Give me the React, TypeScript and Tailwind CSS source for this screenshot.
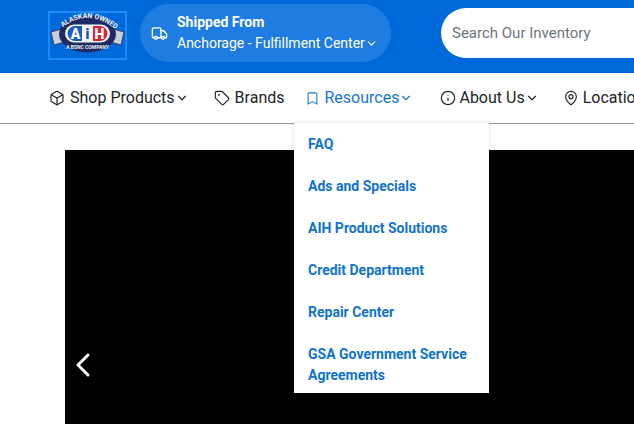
import { Box, Tag, Bookmark, Info, MapPin, ChevronDown, ChevronLeft } from "lucide-react";

function Logo() {
  return (
    <div className="w-[79px] h-[49px] border-2 border-[#1a8cff] shrink-0 flex items-center justify-center">
      <svg width="75" height="45" viewBox="0 0 75 45">
        <path d="M1 19 L15 15 L18 28 L4 32 Z" fill="#c9ced8" stroke="#39406f" strokeWidth="1" />
        <path d="M74 19 L60 15 L57 28 L71 32 Z" fill="#c9ced8" stroke="#39406f" strokeWidth="1" />
        <ellipse cx="37.5" cy="21" rx="28.5" ry="18.5" fill="#1f2a63" />
        <path id="logoArc" d="M12 15 Q37 -5 64 15" fill="none" />
        <text fontFamily="Roboto, sans-serif" fontSize="7" fontWeight="700" fill="#eef1f7">
          <textPath href="#logoArc" startOffset="1">ALASKAN OWNED</textPath>
        </text>
        <rect x="15" y="11.5" width="45" height="18" rx="9" fill="#f4f6fb" />
        <path d="M25 13 H32 V28 H25 A7.5 7.5 0 0 1 25 13 Z" fill="#1c5fc0" />
        <path d="M43 13 H50 A7.5 7.5 0 0 1 50 28 H43 Z" fill="#d8242f" />
        <text x="25.5" y="26" textAnchor="middle" fontFamily="Roboto, sans-serif" fontSize="14" fontWeight="900" fill="#fff">A</text>
        <text x="37.5" y="26" textAnchor="middle" fontFamily="Roboto, sans-serif" fontSize="14" fontWeight="900" fill="#1c4fa8">i</text>
        <text x="49.5" y="26" textAnchor="middle" fontFamily="Roboto, sans-serif" fontSize="14" fontWeight="900" fill="#fff">H</text>
        <text x="37.5" y="36" textAnchor="middle" fontFamily="Roboto, sans-serif" fontSize="5" fontWeight="700" fill="#eef1f7">A BSNC COMPANY</text>
      </svg>
    </div>
  );
}

function NavItem({ icon, label, chevron, active, className }: { icon: React.ReactNode; label: string; chevron?: boolean; active?: boolean; className?: string }) {
  return (
    <div className={`flex items-center shrink-0 ${active ? "text-[#1976d2]" : "text-[#212529]"} ${className ?? ""}`}>
      {icon}
      <span className="ml-[5px] text-[16px] leading-6 whitespace-nowrap">{label}</span>
      {chevron && <ChevronDown size={14} strokeWidth={2} />}
    </div>
  );
}

const links = ["FAQ", "Ads and Specials", "AIH Product Solutions", "Credit Department", "Repair Center", "GSA Government Service Agreements"];

export default function App() {
  return (
    <div className="relative w-[634px] h-[424px] overflow-hidden bg-white font-['Roboto',sans-serif]">
      <header className="h-[73px] bg-[#0069d9] flex items-center pl-[48px] overflow-hidden">
        <div className="mb-[2px]"><Logo /></div>
        <div className="ml-[13px] mb-[7px] w-[251px] h-[58px] shrink-0 rounded-[29px] bg-[#1f7de2] flex items-center pl-[11px] text-white">
          <svg width="17" height="17" viewBox="0 0 24 24" fill="none" stroke="currentColor" strokeWidth="2" strokeLinecap="round" strokeLinejoin="round">
            <path d="M14 18V6a2 2 0 0 0-2-2H4a2 2 0 0 0-2 2v11a1 1 0 0 0 1 1h2" />
            <path d="M15 18H9" />
            <path d="M19 18h2a1 1 0 0 0 1-1v-3.65a1 1 0 0 0-.22-.624l-3.48-4.35A1 1 0 0 0 17.52 8H14" />
            <circle cx="17" cy="18" r="2" />
            <circle cx="7" cy="18" r="2" />
          </svg>
          <div className="ml-[9px]">
            <div className="text-[14px] leading-[21px] font-bold">Shipped From</div>
            <div className="flex items-center text-[14px] leading-[21px]">
              <span className="whitespace-nowrap">Anchorage - Fulfillment Center</span>
              <ChevronDown size={13} strokeWidth={2} />
            </div>
          </div>
        </div>
        <div className="ml-[50px] mb-[7px] w-[260px] h-[50px] shrink-0 rounded-l-[25px] bg-white flex items-center pl-[11px] text-[15px] text-[#6c757d]">
          Search Our Inventory
        </div>
      </header>

      <nav className="h-[51px] border-b border-[#999] flex items-center pl-[49px] overflow-hidden">
        <NavItem icon={<Box size={16} strokeWidth={1.75} />} label="Shop Products" chevron />
        <NavItem className="ml-[25px]" icon={<Tag size={16} strokeWidth={1.75} />} label="Brands" />
        <NavItem className="ml-[20px]" active icon={<Bookmark size={15} strokeWidth={1.75} />} label="Resources" chevron />
        <NavItem className="ml-[27px]" icon={<Info size={16} strokeWidth={1.75} className="-mr-[2px]" />} label="About Us" chevron />
        <NavItem className="ml-[24px]" icon={<MapPin size={16} strokeWidth={1.75} className="-mr-[1px]" />} label="Locations" />
      </nav>

      <main className="pt-[26px] pl-[65px]">
        <div className="h-[430px] bg-black flex items-center text-white">
          <ChevronLeft size={40} strokeWidth={1.75} className="-ml-[2px]" />
        </div>
      </main>

      <div className="absolute left-[294px] top-[123px] w-[195px] h-[270px] bg-white shadow-[0_0_4px_rgba(0,0,0,0.15)] px-[14px] pt-[11px]">
        {links.map((l) => (
          <div key={l} className="mb-[21px] text-[14px] leading-[21px] font-bold text-[#0f73ce]">{l}</div>
        ))}
      </div>
    </div>
  );
}
